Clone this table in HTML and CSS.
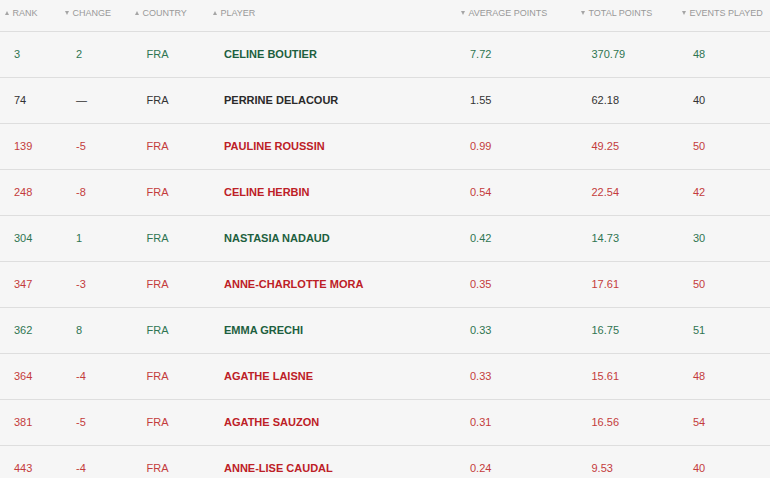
FILE: index.html
```html
<!DOCTYPE html>
<html>
<head>
<meta charset="utf-8">
<link rel="stylesheet" href="styles.css">
</head>
<body>
<div class="table">
  <div class="row head">
    <div class="h"><span class="tri up"></span>RANK</div>
    <div class="h"><span class="tri down"></span>CHANGE</div>
    <div class="h"><span class="tri up"></span>COUNTRY</div>
    <div class="h"><span class="tri up"></span>PLAYER</div>
    <div class="h"><span class="tri down"></span>AVERAGE POINTS</div>
    <div class="h"><span class="tri down"></span>TOTAL POINTS</div>
    <div class="h"><span class="tri down"></span>EVENTS PLAYED</div>
  </div>
  <div class="row green"><div class="c">3</div><div class="c">2</div><div class="c">FRA</div><div class="c name">CELINE BOUTIER</div><div class="c">7.72</div><div class="c">370.79</div><div class="c">48</div></div>
  <div class="row neutral"><div class="c">74</div><div class="c">—</div><div class="c">FRA</div><div class="c name">PERRINE DELACOUR</div><div class="c">1.55</div><div class="c">62.18</div><div class="c">40</div></div>
  <div class="row red"><div class="c">139</div><div class="c">-5</div><div class="c">FRA</div><div class="c name">PAULINE ROUSSIN</div><div class="c">0.99</div><div class="c">49.25</div><div class="c">50</div></div>
  <div class="row red"><div class="c">248</div><div class="c">-8</div><div class="c">FRA</div><div class="c name">CELINE HERBIN</div><div class="c">0.54</div><div class="c">22.54</div><div class="c">42</div></div>
  <div class="row green"><div class="c">304</div><div class="c">1</div><div class="c">FRA</div><div class="c name">NASTASIA NADAUD</div><div class="c">0.42</div><div class="c">14.73</div><div class="c">30</div></div>
  <div class="row red"><div class="c">347</div><div class="c">-3</div><div class="c">FRA</div><div class="c name">ANNE-CHARLOTTE MORA</div><div class="c">0.35</div><div class="c">17.61</div><div class="c">50</div></div>
  <div class="row green"><div class="c">362</div><div class="c">8</div><div class="c">FRA</div><div class="c name">EMMA GRECHI</div><div class="c">0.33</div><div class="c">16.75</div><div class="c">51</div></div>
  <div class="row red"><div class="c">364</div><div class="c">-4</div><div class="c">FRA</div><div class="c name">AGATHE LAISNE</div><div class="c">0.33</div><div class="c">15.61</div><div class="c">48</div></div>
  <div class="row red"><div class="c">381</div><div class="c">-5</div><div class="c">FRA</div><div class="c name">AGATHE SAUZON</div><div class="c">0.31</div><div class="c">16.56</div><div class="c">54</div></div>
  <div class="row red"><div class="c">443</div><div class="c">-4</div><div class="c">FRA</div><div class="c name">ANNE-LISE CAUDAL</div><div class="c">0.24</div><div class="c">9.53</div><div class="c">40</div></div>
</div>
</body>
</html>
```
FILE: styles.css
```css
html, body {
  margin: 0;
  padding: 0;
  background: #f6f6f6;
  overflow: hidden;
}
body {
  font-family: "Liberation Sans", Arial, sans-serif;
}
.table {
  width: 770px;
}
.row {
  display: grid;
  grid-template-columns: 60px 70px 78px 248px 120px 101px 1fr;
  padding-left: 5px;
  border-bottom: 1px solid #dedede;
}
.head {
  height: 23px;
  padding-top: 8px;
  font-size: 9px;
  line-height: 10px;
  color: #999999;
}
.h {
  display: flex;
  align-items: center;
  height: 10px;
}
.tri {
  width: 0;
  height: 0;
  border-left: 2.5px solid transparent;
  border-right: 2.5px solid transparent;
  margin-right: 3.5px;
}
.tri.up {
  border-bottom: 4px solid #a5a5a5;
}
.tri.down {
  border-top: 4px solid #a5a5a5;
}
.row:not(.head) {
  height: 43px;
  padding-bottom: 2px;
  align-items: center;
  font-size: 11px;
}
.c {
  padding-left: 9px;
}
.c:nth-child(2) { padding-left: 11px; }
.c:nth-child(3) { padding-left: 11.5px; }
.c:nth-child(6) { padding-left: 10.5px; }
.c:nth-child(7) { padding-left: 11px; }
.name {
  font-weight: bold;
  padding-left: 11px;
}
.green { color: #2f7552; }
.green .name { color: #1d5f40; }
.red { color: #c43c3c; }
.red .name { color: #bd2026; }
.neutral { color: #333333; }
.neutral .name { color: #2a2a2a; }
```
